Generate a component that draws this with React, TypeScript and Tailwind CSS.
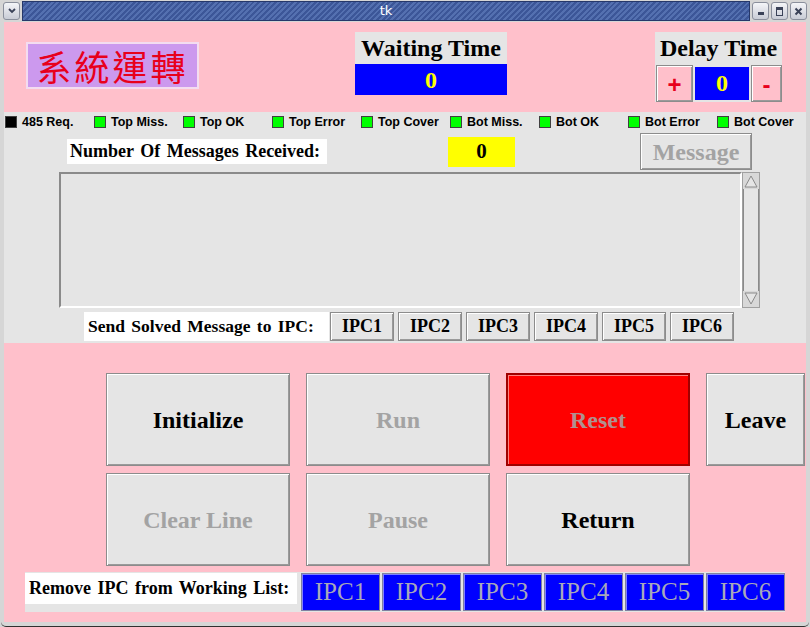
import { ReactNode } from "react";

const serif = "font-['Liberation_Serif',serif]";
const raised =
  "border border-[#8c8c8c] shadow-[inset_1px_1px_0_#ffffff,inset_-1px_-1px_0_#9a9a9a]";

const LAMPS: { label: string; on: boolean }[] = [
  { label: "485 Req.", on: false },
  { label: "Top Miss.", on: true },
  { label: "Top OK", on: true },
  { label: "Top Error", on: true },
  { label: "Top Cover", on: true },
  { label: "Bot Miss.", on: true },
  { label: "Bot OK", on: true },
  { label: "Bot Error", on: true },
  { label: "Bot Cover", on: true },
];

const IPCS = ["IPC1", "IPC2", "IPC3", "IPC4", "IPC5", "IPC6"];

function TitleButton({ children }: { children: ReactNode }) {
  return (
    <div className="flex h-[18px] w-[17px] items-center justify-center rounded-[3px] border border-[#8a8f9c] bg-gradient-to-b from-[#f4f5f8] to-[#c9ccd6]">
      {children}
    </div>
  );
}

function BigButton({
  label,
  dim,
  className = "",
}: {
  label: string;
  dim?: boolean;
  className?: string;
}) {
  return (
    <div
      className={`flex h-[93px] items-center justify-center bg-[#e5e5e5] text-[24px] font-bold ${serif} ${raised} ${
        dim ? "text-[#a3a3a3]" : "text-black"
      } ${className}`}
    >
      {label}
    </div>
  );
}

export default function App() {
  return (
    <div className="flex h-[627px] w-[810px] flex-col overflow-hidden bg-[#d6d6d6]">
      {/* window title bar */}
      <div className="flex h-[22px] items-center gap-[2px] px-[3px]">
        <TitleButton>
          <svg width="10" height="8" viewBox="0 0 10 8">
            <path d="M2 2 L5 5 L8 2" fill="none" stroke="#3a4258" strokeWidth="1.8" />
          </svg>
        </TitleButton>
        <div className="flex h-[20px] flex-1 items-center justify-center border border-[#26386a] bg-[repeating-linear-gradient(135deg,#5470b0_0px,#5470b0_2px,#3c5698_2px,#3c5698_4px)] font-['DejaVu_Sans',sans-serif] text-[13px] text-white">
          tk
        </div>
        <TitleButton>
          <div className="mt-[4px] h-[3px] w-[6px] bg-[#3a4258]" />
        </TitleButton>
        <TitleButton>
          <div className="h-[9px] w-[7px] border border-t-[3px] border-[#3a4258]" />
        </TitleButton>
        <TitleButton>
          <svg width="9" height="9" viewBox="0 0 9 9">
            <path d="M1.5 1.5 L7.5 7.5 M7.5 1.5 L1.5 7.5" stroke="#3a4258" strokeWidth="2" />
          </svg>
        </TitleButton>
      </div>

      <div className="mx-[4px] flex flex-1 flex-col">
        {/* header */}
        <div className="flex h-[90px] items-start bg-[#ffc0cb] pl-[22px]">
          <div className="mt-[20px] flex h-[47px] w-[173px] items-center justify-center border-2 border-[#f4dcf0] bg-[#cc99ee] font-['Noto_Sans_CJK_TC',sans-serif] text-[35px] leading-none tracking-[3px] text-[#e8001c]">
            系統運轉
          </div>
          <div className={`ml-[156px] mt-[10px] w-[152px] ${serif} font-bold`}>
            <div className="flex h-[32px] items-center justify-center bg-[#e5e5e5] text-[24px] text-black">
              Waiting Time
            </div>
            <div className="flex h-[31px] items-center justify-center bg-[#0000ff] text-[24px] text-[#ffff00]">
              0
            </div>
          </div>
          <div className={`ml-[148px] mt-[10px] w-[127px] bg-[#e5e5e5] ${serif} font-bold`}>
            <div className="flex h-[32px] items-center justify-center text-[24px] text-black">
              Delay Time
            </div>
            <div className="flex h-[38px] items-center pl-[1px]">
              <div className={`flex h-[37px] w-[37px] items-center justify-center bg-[#ffc0cb] pt-[4px] font-['Liberation_Sans',sans-serif] text-[24px] text-[#e8001c] ${raised}`}>
                +
              </div>
              <div className="mx-[2px] flex h-[33px] w-[54px] items-center justify-center bg-[#0000ff] text-[24px] text-[#ffff00]">
                0
              </div>
              <div className={`flex h-[37px] w-[31px] items-center justify-center bg-[#ffc0cb] pt-[4px] font-['Liberation_Sans',sans-serif] text-[24px] text-[#e8001c] ${raised}`}>
                -
              </div>
            </div>
          </div>
        </div>

        {/* message panel */}
        <div className="flex h-[231px] flex-col bg-[#e5e5e5]">
          <div className="flex h-[19px] items-center pl-[1px] pt-[1px]">
            {LAMPS.map((l) => (
              <div
                key={l.label}
                className="flex w-[90px] items-center gap-[5px] font-['Liberation_Sans',sans-serif] text-[12.5px] font-bold text-black"
              >
                <div
                  className={`h-[12px] w-[12px] border border-[#404040] ${
                    l.on ? "bg-[#00ff00]" : "bg-black"
                  }`}
                />
                {l.label}
              </div>
            ))}
          </div>

          <div className={`flex h-[41px] items-center ${serif} font-bold`}>
            <div className="ml-[63px] flex h-[25px] w-[260px] items-center bg-white pl-[3px] text-[18px] text-black [word-spacing:2px]">
              Number Of Messages Received:
            </div>
            <div className="ml-[121px] flex h-[30px] w-[67px] items-center justify-center bg-[#ffff00] text-[21px] text-black">
              0
            </div>
            <div className={`ml-[125px] flex h-[37px] w-[112px] items-center justify-center bg-[#e5e5e5] text-[24px] text-[#a3a3a3] ${raised}`}>
              Message
            </div>
          </div>

          <div className="flex h-[136px] pl-[55px]">
            <div className="w-[683px] border-2 border-t-[#8a8a8a] border-l-[#8a8a8a] border-b-white border-r-white bg-[#e5e5e5]" />
            <div className="flex w-[18px] flex-col border border-[#a0a0a0] bg-[#d8d8d8]">
              <svg width="16" height="16" viewBox="0 0 16 16">
                <path d="M2 14 L8 3 L14 14 Z" fill="#e5e5e5" stroke="#8a8a8a" strokeWidth="1" />
              </svg>
              <div className="flex-1 border-x border-[#8a8a8a] bg-[#e5e5e5]" />
              <svg width="16" height="16" viewBox="0 0 16 16">
                <path d="M2 2 L8 13 L14 2 Z" fill="#e5e5e5" stroke="#8a8a8a" strokeWidth="1" />
              </svg>
            </div>
          </div>

          <div className={`mt-[4px] flex h-[29px] items-stretch pl-[80px] ${serif} font-bold`}>
            <div className="flex w-[245px] items-center bg-white pl-[4px] text-[17.5px] text-black [word-spacing:2px]">
              Send Solved Message to IPC:
            </div>
            <div className="ml-[1px] flex gap-[4px]">
              {IPCS.map((n) => (
                <div
                  key={n}
                  className={`flex w-[64px] items-center justify-center bg-[#e5e5e5] text-[18px] text-black ${raised}`}
                >
                  {n}
                </div>
              ))}
            </div>
          </div>
        </div>

        {/* control panel */}
        <div className="flex flex-1 flex-col bg-[#ffc0cb] pl-[102px] pt-[30px]">
          <div className="flex gap-[16px]">
            <BigButton label="Initialize" className="w-[184px]" />
            <BigButton label="Run" dim className="w-[184px]" />
            <div
              className={`flex h-[93px] w-[184px] items-center justify-center border-2 border-[#a00000] bg-[#ff0000] text-[24px] font-bold text-[#b09090] shadow-[inset_1px_1px_0_#ff8080] ${serif}`}
            >
              Reset
            </div>
            <BigButton label="Leave" className="w-[99px]" />
          </div>
          <div className="mt-[7px] flex gap-[16px]">
            <BigButton label="Clear Line" dim className="w-[184px]" />
            <BigButton label="Pause" dim className="w-[184px]" />
            <BigButton label="Return" className="w-[184px]" />
          </div>
          <div className={`-ml-[81px] mt-[6px] flex h-[40px] w-[760px] bg-[#e5e5e5] pt-[1px] ${serif}`}>
            <div className="flex h-[31px] w-[272px] items-center bg-white pl-[4px] text-[18px] font-bold text-black [word-spacing:2px]">
              Remove IPC from Working List:
            </div>
            <div className="ml-[4px] flex h-[38px] gap-[2px]">
              {IPCS.map((n) => (
                <div
                  key={n}
                  className="flex w-[79px] items-center justify-center border border-[#8080a0] bg-[#0000ff] text-[25px] text-[#a8a8b8] shadow-[inset_1px_1px_0_#8080ff]"
                >
                  {n}
                </div>
              ))}
            </div>
          </div>
        </div>
      </div>
      <div className="mx-[1px] h-[5px] rounded-b-[6px] border-b border-[#303030] bg-[#d6d6d6]" />
    </div>
  );
}
